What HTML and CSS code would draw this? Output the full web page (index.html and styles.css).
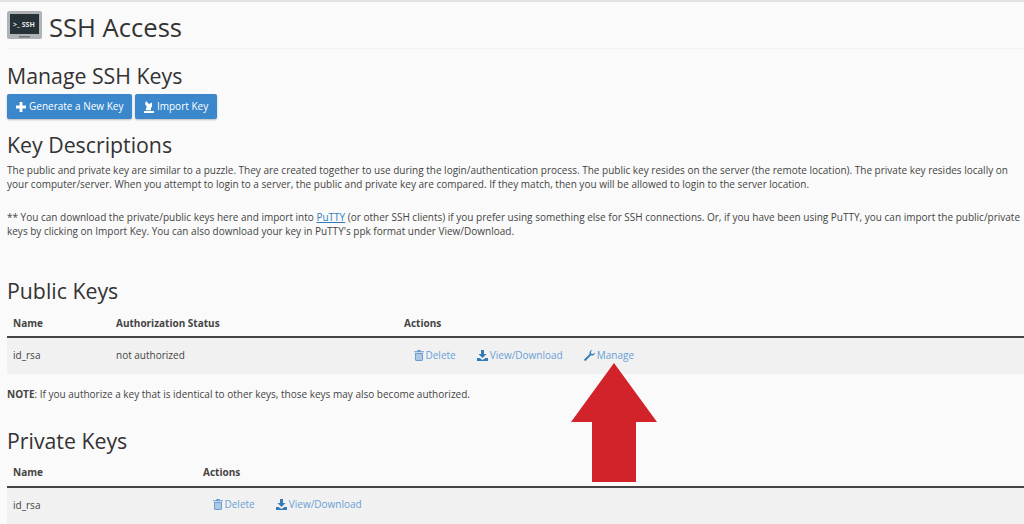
FILE: index.html
```html
<!DOCTYPE html>
<html lang="en">
<head>
    <meta charset="UTF-8">
    <title>SSH Access</title>
    <link rel="stylesheet" href="styles.css">
</head>
<body>
    <div class="page">
        <header class="page-header">
            <svg class="app-icon" width="35" height="28" viewBox="0 0 35 28">
                <rect width="35" height="28" rx="2" fill="#b0b2b4"/>
                <rect x="3" y="3" width="29" height="20" fill="#263238"/>
                <rect x="12" y="25" width="11" height="1.500" fill="#6f7275"/>
                <text x="6" y="15.500" class="app-icon-text">&gt;_ SSH</text>
            </svg>
            <h1>SSH Access</h1>
        </header>

        <h2 class="manage-title">Manage SSH Keys</h2>
        <div class="btn-row">
            <a class="btn" href="#">
                <svg class="icon" width="10" height="10" viewBox="0 0 10 10"><path d="M3.600 0h2.800v3.600H10v2.800H6.400V10H3.600V6.400H0V3.600h3.600z" fill="#fff"/></svg>
                Generate a New Key
            </a>
            <a class="btn" href="#">
                <svg class="icon" width="10" height="12" viewBox="0 0 10 12"><path d="M0 10h10v2H0zM2 9.200V7l1-1-2-3 1-3 3 3 3-1.500V5.500L7 7v2.200z" fill="#fff"/></svg>
                Import Key
            </a>
        </div>

        <h2 class="desc-title">Key Descriptions</h2>
        <p class="desc">The public and private key are similar to a puzzle. They are created together to use during the login/authentication process. The public key resides on the server (the remote location). The private key resides locally on your computer/server. When you attempt to login to a server, the public and private key are compared. If they match, then you will be allowed to login to the server location.</p>
        <p class="desc desc-second">** You can download the private/public keys here and import into <a href="#" class="link">PuTTY</a> (or other SSH clients) if you prefer using something else for SSH connections. Or, if you have been using PuTTY, you can import the public/private keys by clicking on Import Key. You can also download your key in PuTTY's ppk format under View/Download.</p>

        <h2 class="public-title">Public Keys</h2>
        <table class="keys">
            <thead>
                <tr><th class="col-name">Name</th><th class="col-status">Authorization Status</th><th>Actions</th></tr>
            </thead>
            <tbody>
                <tr>
                    <td>id_rsa</td>
                    <td>not authorized</td>
                    <td class="actions">
                        <a href="#">
                            <svg width="10" height="11" viewBox="0 0 10 11"><path d="M3.500 0h3l.6 1.200H10v1H0v-1h2.900zM1 3h8v7l-1 1H2l-1-1zm1.500 1v6h1V4zm2 0v6h1V4zm2 0v6h1V4z" fill="#6a9fd4"/></svg>
                            Delete
                        </a>
                        <a href="#">
                            <svg width="11" height="11" viewBox="0 0 11 11"><path d="M4 0h3v4h2.500L5.500 8 1.500 4H4zM0 8h2.500l3 2 3-2H11v3H0z" fill="#337ab7"/></svg>
                            View/Download
                        </a>
                        <a href="#">
                            <svg width="11" height="11" viewBox="0 0 11 11"><path d="M11 2.500A3 3 0 0 1 7 5.300L2 10.500a1 1 0 0 1-1.500-1.500L5.700 4A3 3 0 0 1 8.500 0L6.800 1.700l.4 2 2 .4z" fill="#337ab7"/></svg>
                            Manage
                        </a>
                    </td>
                </tr>
            </tbody>
        </table>
        <p class="note"><strong>NOTE</strong>: If you authorize a key that is identical to other keys, those keys may also become authorized.</p>

        <h2 class="private-title">Private Keys</h2>
        <table class="keys">
            <thead>
                <tr><th class="col-name-private">Name</th><th>Actions</th></tr>
            </thead>
            <tbody>
                <tr>
                    <td>id_rsa</td>
                    <td class="actions">
                        <a href="#">
                            <svg width="10" height="11" viewBox="0 0 10 11"><path d="M3.500 0h3l.6 1.200H10v1H0v-1h2.900zM1 3h8v7l-1 1H2l-1-1zm1.500 1v6h1V4zm2 0v6h1V4zm2 0v6h1V4z" fill="#6a9fd4"/></svg>
                            Delete
                        </a>
                        <a href="#">
                            <svg width="11" height="11" viewBox="0 0 11 11"><path d="M4 0h3v4h2.500L5.500 8 1.500 4H4zM0 8h2.500l3 2 3-2H11v3H0z" fill="#337ab7"/></svg>
                            View/Download
                        </a>
                    </td>
                </tr>
            </tbody>
        </table>
    </div>

    <svg class="arrow" width="86" height="119" viewBox="0 0 86 119"><path d="M43 0l43 59H65v60H21V59H0z" fill="#d2232a"/></svg>
</body>
</html>
```

FILE: styles.css
```css
body {
    margin: 0;
    height: 524px;
    overflow: hidden;
    background: #fafafa;
    color: #444;
    font-family: "Open Sans", "Liberation Sans", sans-serif;
    font-size: 10px;
    line-height: 13.500px;
    border-top: 2px solid #e2e2e2;
    box-sizing: border-box;
    position: relative;
}

.page {
    padding-left: 7px;
}

h1, h2 {
    font-weight: 400;
    margin: 0;
    color: #333;
}

h1 {
    font-size: 25.600px;
    line-height: 36px;
}

h2 {
    font-size: 21.300px;
    line-height: 30px;
}

.page-header {
    display: flex;
    align-items: center;
    gap: 7px;
    height: 47px;
    box-sizing: border-box;
    padding-top: 9px;
    padding-bottom: 4px;
    border-bottom: 1px solid #f1f1f1;
}

.app-icon {
    margin-top: -5px;
}

.app-icon-text {
    font-family: "Open Sans", sans-serif;
    font-size: 7px;
    font-weight: 700;
    fill: #e8e8e8;
}

.manage-title {
    margin-top: 12px;
}

.btn-row {
    display: flex;
    gap: 3px;
    margin-top: 3px;
}

.btn {
    display: flex;
    align-items: center;
    gap: 3px;
    height: 25px;
    box-sizing: border-box;
    padding: 0 8.500px 0 9px;
    background: #3a87cc;
    border-radius: 2px;
    box-shadow: 0 1px 2px rgba(0, 0, 0, 0.25);
    color: #fff;
    text-decoration: none;
}

.desc-title {
    margin-top: 11px;
}

.desc {
    margin: 4px 0 0;
}

.desc-second {
    margin-top: 20px;
}

.link {
    color: #337ab7;
}

.public-title {
    margin-top: 38px;
}

.keys {
    width: 1017px;
    border-collapse: collapse;
    margin-top: 5px;
}

.keys th {
    text-align: left;
    font-weight: 700;
    height: 26px;
    padding: 0 6px;
    border-bottom: 2px solid #444;
    box-sizing: border-box;
}

.keys td {
    height: 37px;
    padding: 0 6px;
    box-sizing: border-box;
    background: #f1f1f1;
}

.col-name {
    width: 103px;
}

.col-status {
    width: 288px;
}

.col-name-private {
    width: 190px;
}

.keys .actions {
    padding: 1px 6px 0 16px;
}

.actions a {
    display: inline-flex;
    align-items: center;
    gap: 1.500px;
    margin-right: 19px;
    color: #6a9fd4;
    text-decoration: none;
}

.note {
    margin: 14px 0 0;
}

.private-title {
    margin-top: 24px;
}

.arrow {
    position: absolute;
    left: 571px;
    top: 361px;
}
```
